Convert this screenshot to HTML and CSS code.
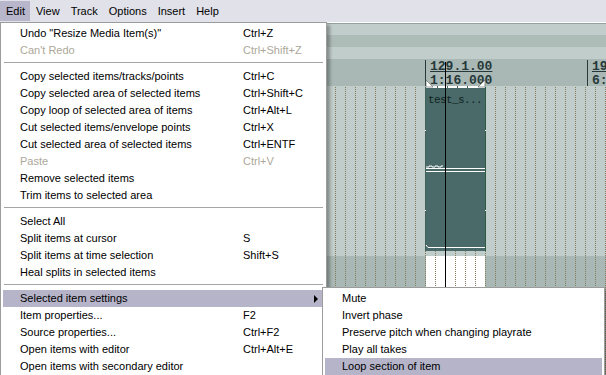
FILE: index.html
```html
<!DOCTYPE html>
<html lang="en">
<head>
    <meta charset="UTF-8">
    <title>Edit menu</title>
    <link rel="stylesheet" href="styles.css">
</head>
<body>
    <div class="menubar">
        <span class="open">Edit</span>
        <span>View</span>
        <span>Track</span>
        <span>Options</span>
        <span>Insert</span>
        <span>Help</span>
    </div>

    <div class="workspace">
        <div class="edge"></div>
        <div class="edge-dark"></div>
        <div class="band"></div>
        <div class="band dark"></div>
        <div class="band"></div>
        <div class="ruler">
            <div class="marker" style="left: 425px;">
                <span class="bar">129.1.00</span>
                <span>1:16.000</span>
            </div>
            <div class="marker" style="left: 587px;">
                <span class="bar">19</span>
                <span>6:2</span>
            </div>
        </div>
        <div class="track"></div>
        <div class="track lower"></div>

        <!-- media item -->
        <div class="item">
            <svg class="item-lines" width="61" height="164" viewBox="0 0 61 164">
                <polyline points="1,80 4,80 4,79 7,79 7,80 10,80 10,79 13,79 13,80 16,80 16,79 18,79" fill="none" stroke="#fff" stroke-width="1"/>
                <rect x="1" y="81" width="59" height="1" fill="#fff"/>
                <rect x="1" y="84" width="59" height="1" fill="#fff"/>
                <rect x="0" y="43" width="1" height="1" fill="#fff"/>
                <rect x="60" y="43" width="1" height="1" fill="#fff"/>
                <rect x="0" y="123" width="1" height="1" fill="#fff"/>
                <rect x="60" y="123" width="1" height="1" fill="#fff"/>
                <polyline points="1,158 3,160.5 60,160.5" fill="none" stroke="#fff" stroke-width="1"/>
            </svg>
            <span class="item-name">test_s...</span>
        </div>
        <svg class="fades" width="61" height="11" viewBox="0 0 61 11">
            <rect x="1" y="7" width="59" height="2" fill="#fff"/>
            <rect x="12" y="7" width="1" height="2" fill="#55605c"/>
            <rect x="22" y="7" width="1" height="2" fill="#55605c"/>
            <rect x="32" y="7" width="1" height="2" fill="#55605c"/>
            <rect x="42" y="7" width="1" height="2" fill="#55605c"/>
            <polygon points="1,1 1,8 8,8" fill="#fff" stroke="#55605c" stroke-width="0.6"/>
            <polygon points="60,1 60,8 53,8" fill="#fff" stroke="#55605c" stroke-width="0.6"/>
        </svg>
        <div class="item-shadow"></div>
        <div class="cursor"></div>
    </div>

    <div class="menu main-menu">
        <div class="row"><span>Undo "Resize Media Item(s)"</span><span>Ctrl+Z</span></div>
        <div class="row off"><span>Can't Redo</span><span>Ctrl+Shift+Z</span></div>
        <div class="sep"></div>
        <div class="row"><span>Copy selected items/tracks/points</span><span>Ctrl+C</span></div>
        <div class="row"><span>Copy selected area of selected items</span><span>Ctrl+Shift+C</span></div>
        <div class="row"><span>Copy loop of selected area of items</span><span>Ctrl+Alt+L</span></div>
        <div class="row"><span>Cut selected items/envelope points</span><span>Ctrl+X</span></div>
        <div class="row"><span>Cut selected area of selected items</span><span>Ctrl+ENTF</span></div>
        <div class="row off"><span>Paste</span><span>Ctrl+V</span></div>
        <div class="row"><span>Remove selected items</span></div>
        <div class="row"><span>Trim items to selected area</span></div>
        <div class="sep"></div>
        <div class="row"><span>Select All</span></div>
        <div class="row"><span>Split items at cursor</span><span>S</span></div>
        <div class="row"><span>Split items at time selection</span><span>Shift+S</span></div>
        <div class="row"><span>Heal splits in selected items</span></div>
        <div class="sep"></div>
        <div class="row hot"><span>Selected item settings</span><span></span><i class="arrow"></i></div>
        <div class="row"><span>Item properties...</span><span>F2</span></div>
        <div class="row"><span>Source properties...</span><span>Ctrl+F2</span></div>
        <div class="row"><span>Open items with editor</span><span>Ctrl+Alt+E</span></div>
        <div class="row"><span>Open items with secondary editor</span></div>
    </div>

    <div class="menu sub-menu">
        <div class="row"><span>Mute</span></div>
        <div class="row"><span>Invert phase</span></div>
        <div class="row"><span>Preserve pitch when changing playrate</span></div>
        <div class="row"><span>Play all takes</span></div>
        <div class="row hot"><span>Loop section of item</span></div>
    </div>
</body>
</html>
```

FILE: styles.css
```css
body {
    margin: 0;
    width: 606px;
    height: 375px;
    overflow: hidden;
    position: relative;
    font-family: "Liberation Sans", Arial, sans-serif;
    font-size: 11px;
    color: #000;
    background-color: #dfe0e8;
}
.menubar {
    display: flex;
    height: 22px;
    background-color: #e0e1e9;
}
.menubar span {
    height: 20px;
    margin-top: 1px;
    line-height: 20px;
    padding: 0 5px 0 6px;
}
.menubar .open {
    background-color: #b7b6cb;
}
.workspace {
    position: relative;
    height: 353px;
    display: flex;
    flex-direction: column;
}
.edge {
    height: 1px;
    background-color: #fff;
}
.edge-dark {
    height: 1px;
    background-color: #93a29e;
}
.band {
    height: 12px;
    background-color: #c1cdca;
}
.band:nth-child(3) {
    height: 11px;
}
.band.dark {
    background-color: #aebcb8;
}
.ruler {
    position: relative;
    height: 27px;
    background-color: #a9b8b4;
}
.marker {
    position: absolute;
    top: 1px;
    height: 26px;
    border-left: 1px solid #2a3a3a;
    padding-left: 4px;
    display: flex;
    flex-direction: column;
    font-family: "Liberation Mono", "Courier New", monospace;
    font-size: 13px;
    font-weight: bold;
    line-height: 13px;
    color: #26383a;
}
.marker .bar {
    text-decoration: underline;
    margin-bottom: 1px;
}
.track {
    height: 170px;
    background-color: #c1cdca;
    background-image: linear-gradient(to bottom, #c1cdca 1px, transparent 1px), linear-gradient(to right, #847b58 1px, transparent 1px);
    background-size: 100% 2px, 10px 100%;
    background-position: 0 0, 5px 0;
}
.track.lower {
    height: auto;
    flex: 1;
    background-color: #a9b8b4;
    background-image: linear-gradient(to bottom, #a9b8b4 1px, transparent 1px), linear-gradient(to right, #847b58 1px, transparent 1px);
}
.item {
    position: absolute;
    z-index: 1;
    left: 425px;
    top: 65px;
    width: 61px;
    height: 164px;
    box-sizing: border-box;
    padding: 6px 0 0 2px;
    background-color: #4a6a69;
    border-left: 1px solid #3e6259;
    border-right: 1px solid #2c5a42;
}
.item-lines {
    position: absolute;
    left: -1px;
    top: 0;
}
.item-name {
    position: relative;
    display: block;
    font-family: "Liberation Mono", "Courier New", monospace;
    font-size: 11px;
    letter-spacing: -0.6px;
    line-height: 14px;
    color: #0f2222;
}
.fades {
    position: absolute;
    z-index: 2;
    left: 425px;
    top: 57px;
}
.item-shadow {
    position: absolute;
    left: 426px;
    top: 234px;
    width: 59px;
    height: 70px;
    background-color: #fff;
    background-image: linear-gradient(to bottom, #fff 1px, transparent 1px), linear-gradient(to right, #847b58 1px, transparent 1px);
    background-size: 100% 2px, 10px 100%;
    background-position: 0 0, 9px 0;
}
.cursor {
    position: absolute;
    z-index: 3;
    left: 445px;
    top: 40px;
    bottom: 0;
    width: 1px;
    background-color: #000;
}
.menu {
    position: absolute;
    z-index: 5;
    box-sizing: border-box;
    background-color: #fff;
    border: 1px solid #9c9c9c;
    padding: 2px;
    box-shadow: 3px 3px 3px rgba(0,0,0,0.3);
}
.main-menu {
    left: 0;
    top: 22px;
    width: 327px;
    height: 380px;
}
.sub-menu {
    left: 322px;
    top: 287px;
    width: 283px;
    height: 100px;
}
.row {
    display: grid;
    grid-template-columns: 223px 1fr auto;
    align-items: center;
    height: 17px;
    line-height: 17px;
    padding-left: 17px;
    white-space: nowrap;
}
.row.off {
    color: #aca899;
}
.row.hot {
    background-color: #b6b4c9;
}
.arrow {
    width: 0;
    height: 0;
    margin-right: 6px;
    border-top: 4px solid transparent;
    border-bottom: 4px solid transparent;
    border-left: 4px solid #000;
}
.sep {
    height: 9px;
    position: relative;
}
.sep::after {
    content: "";
    position: absolute;
    left: 1px;
    right: 1px;
    top: 3px;
    height: 1px;
    background-color: #a5a5a5;
}
```
